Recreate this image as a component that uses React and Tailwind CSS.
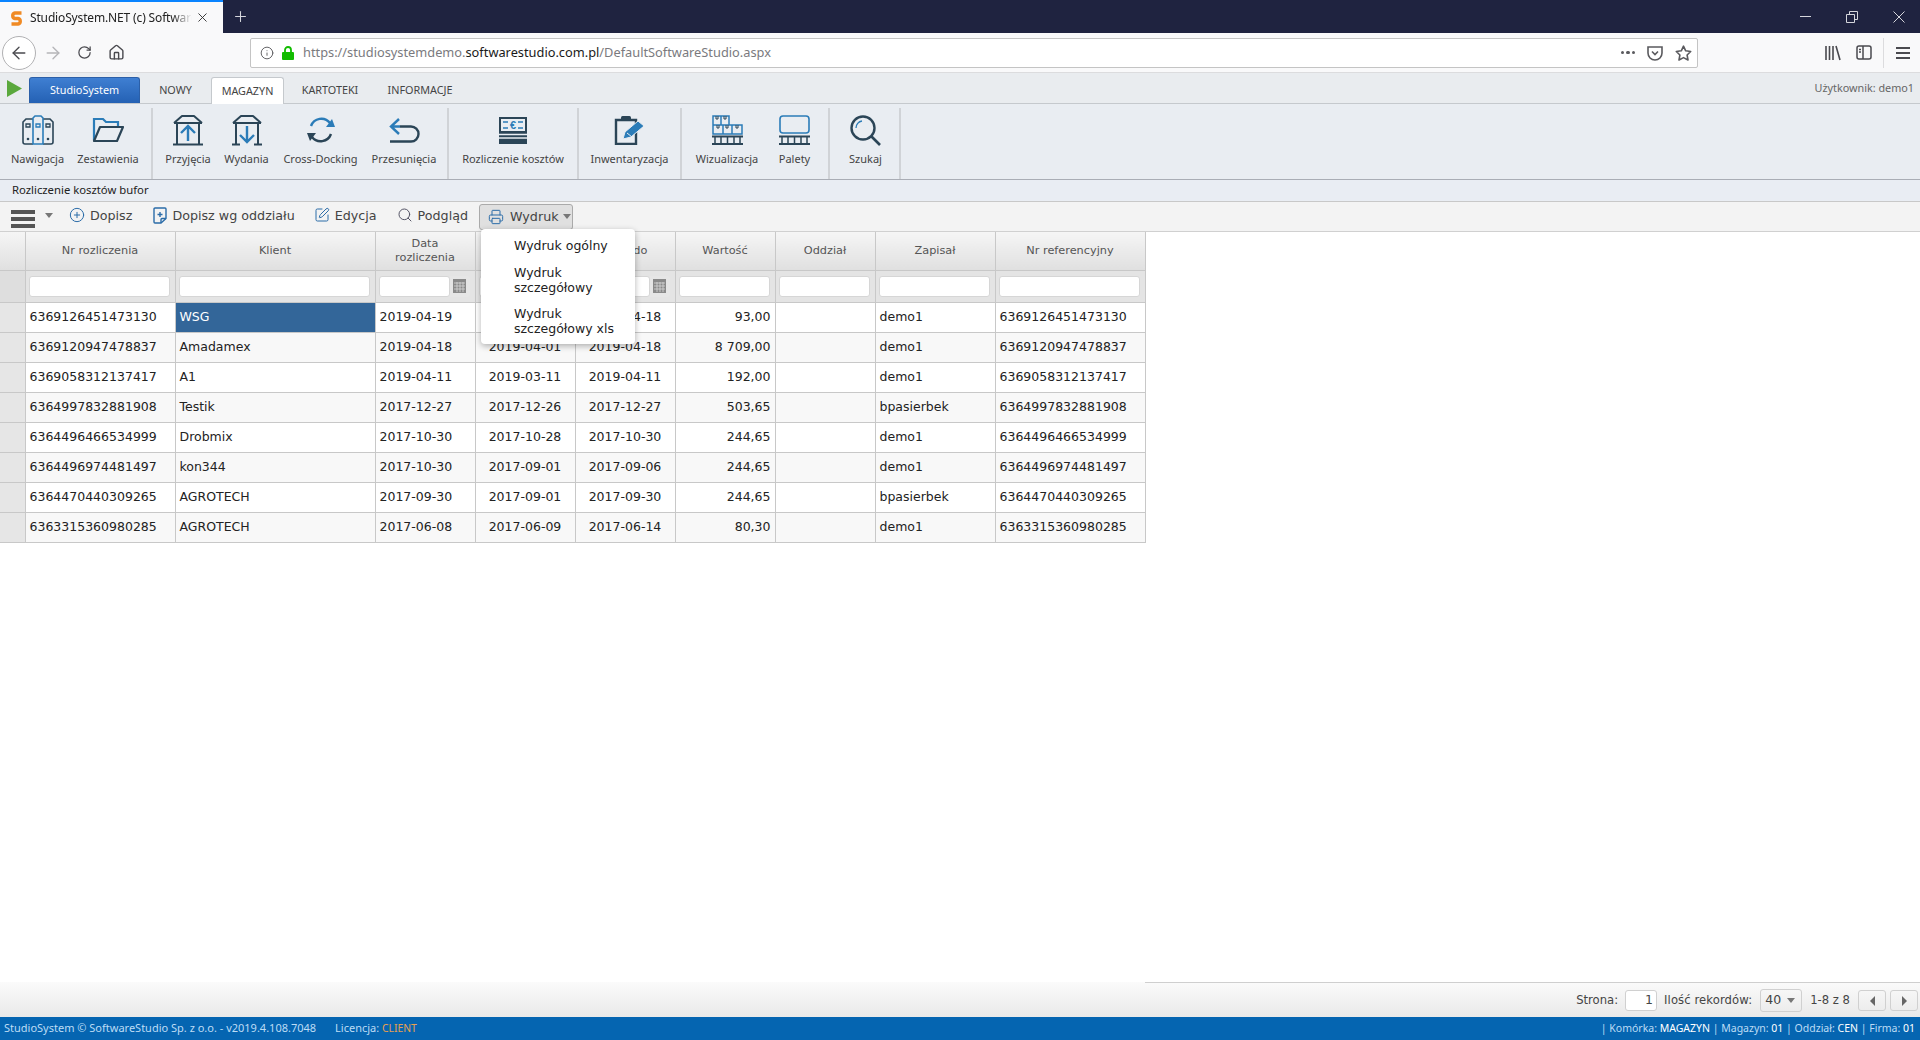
import { ArrowLeft, ArrowRight, RotateCw, House, Info, Plus, X, CirclePlus, SquarePen, Search, Printer } from "lucide-react";

const ui = "font-['Noto_Sans',sans-serif]";
const grid = "font-['DejaVu_Sans',sans-serif]";

const DARK = "#2b4557";
const BLUE = "#2b7cb8";

function Binders() {
  return (
    <svg width="32" height="30" viewBox="0 0 32 30" fill="none" strokeWidth="1.6">
      <path d="M11 29H3a2 2 0 0 1-2-2V7l3-3h7M21 29h8a2 2 0 0 0 2-2V7l-3-3h-7" stroke={DARK} />
      <path d="M11 29V3l2-2h6l2 2v26z" stroke={BLUE} />
      <path d="M4 9h4v3H4zM24 9h4v3h-4z" stroke={DARK} strokeWidth="1.3" />
      <path d="M14 9h4v3h-4z" stroke={BLUE} strokeWidth="1.3" />
      <circle cx="6" cy="24" r="1.3" fill={DARK} />
      <circle cx="16" cy="24" r="1.3" fill={DARK} />
      <circle cx="26" cy="24" r="1.3" fill={DARK} />
    </svg>
  );
}

function Folder() {
  return (
    <svg width="32" height="26" viewBox="0 0 32 26" fill="none" strokeWidth="2.2">
      <path d="M2 23V2h9l3 3h12v4" stroke={BLUE} />
      <path d="M2 24h23l6-14H8z" stroke={DARK} strokeLinejoin="round" />
    </svg>
  );
}

function Store({ down }) {
  return (
    <svg width="34" height="32" viewBox="0 0 34 32" fill="none" strokeWidth="2">
      <path d="M3 9l8-7h12l8 7M3 9h28M6 9v21M28 9v21" stroke={DARK} strokeLinejoin="round" />
      {down ? (
        <>
          <path d="M2 30.5h8M24 30.5h8" stroke={DARK} />
          <path d="M17 12v16M10 21l7 7 7-7" stroke={BLUE} strokeWidth="2.4" />
        </>
      ) : (
        <>
          <path d="M2 30.5h30" stroke={DARK} />
          <path d="M17 27V12M10 19l7-7 7 7" stroke={BLUE} strokeWidth="2.4" />
        </>
      )}
    </svg>
  );
}

function CrossDock() {
  return (
    <svg width="30" height="26" viewBox="0 0 30 26" fill="none" strokeWidth="2.4">
      <path d="M5 9a11 11 0 0 1 19-3" stroke={BLUE} />
      <path d="M20 10h9l-3-8z" fill={BLUE} />
      <path d="M25 17a11 11 0 0 1-19 3" stroke={DARK} />
      <path d="M10 16H1l3 8z" fill={DARK} />
    </svg>
  );
}

function Transfer() {
  return (
    <svg width="32" height="27" viewBox="0 0 32 27" fill="none" strokeWidth="2.4">
      <path d="M11 2L3 9.5l8 7.5M3 9.5h9" stroke={BLUE} />
      <path d="M12 9.5h11a7 7 0 0 1 0 15H2" stroke={DARK} />
    </svg>
  );
}

function Bill() {
  return (
    <svg width="30" height="29" viewBox="0 0 30 29">
      <rect x="1" y="1" width="28" height="27" fill={DARK} />
      <rect x="3" y="3" width="24" height="12" fill="#e9edf2" />
      <path d="M5 6h5M20 6h5M5 12h5M20 12h5" stroke={BLUE} strokeWidth="1.4" />
      <text x="15" y="13" textAnchor="middle" fontSize="11" fontWeight="700" fontFamily="Liberation Sans" fill={BLUE}>€</text>
      <path d="M1 18.5h28M1 22h28" stroke="#e9edf2" strokeWidth="1.3" />
    </svg>
  );
}

function Clipboard() {
  return (
    <svg width="31" height="30" viewBox="0 0 31 30" fill="none">
      <path d="M2 5h20v24H2z" stroke={DARK} strokeWidth="2.4" />
      <rect x="7" y="1" width="10" height="5" rx="1.5" fill={DARK} />
      <path d="M9 24l2-7L24 6l6 5-13 11z" fill={BLUE} stroke="#e9edf2" strokeWidth="1" />
      <path d="M13 18l5 4" stroke="#e9edf2" strokeWidth="1" />
    </svg>
  );
}

function Pallet() {
  return (
    <>
      <path d="M0 21.5h31M0 29h31" stroke={DARK} strokeWidth="2.2" />
      <path d="M3 22v6M15.5 22v6M28 22v6M9 22v6M22 22v6" stroke={DARK} strokeWidth="1.5" />
    </>
  );
}

function Boxes() {
  return (
    <svg width="31" height="30" viewBox="0 0 31 30" fill="none">
      <path d="M1 1h8v9H1zM9 1h8v9H9zM1 10h10v9H1zM11 10h9v9h-9zM20 10h10v9H20z" stroke={BLUE} strokeWidth="1.5" />
      <path d="M4 1v3h2V1M12 1v3h2V1M5 10v3h2v-3M14 10v3h2v-3M24 10v3h2v-3" stroke={DARK} strokeWidth="1" />
      <Pallet />
    </svg>
  );
}

function PalletIcon() {
  return (
    <svg width="31" height="30" viewBox="0 0 31 30" fill="none">
      <rect x="1" y="1" width="29" height="17" rx="3" stroke={BLUE} strokeWidth="1.6" />
      <Pallet />
    </svg>
  );
}

function Lens() {
  return (
    <svg width="31" height="31" viewBox="0 0 31 31" fill="none">
      <circle cx="13" cy="13" r="11.5" stroke={DARK} strokeWidth="2.4" />
      <path d="M6 13a7 7 0 0 1 6-7" stroke={BLUE} strokeWidth="1.3" />
      <path d="M21 21l9 9" stroke={DARK} strokeWidth="2.6" />
    </svg>
  );
}

const ribbon = [
  { w: "w-[153px]", items: [["Nawigacja", "w-[75px]", <Binders />], ["Zestawienia", "w-[66px]", <Folder />]] },
  { w: "w-[296px] pl-[6px]", items: [["Przyjęcia", "w-[58px]", <Store />], ["Wydania", "w-[59px]", <Store down />], ["Cross-Docking", "w-[89px]", <CrossDock />], ["Przesunięcia", "w-[78px]", <Transfer />]] },
  { w: "w-[130px]", items: [["Rozliczenie kosztów", "w-[130px]", <Bill />]] },
  { w: "w-[103px]", items: [["Inwentaryzacja", "w-[103px]", <Clipboard />]] },
  { w: "w-[148px]", items: [["Wizualizacja", "w-[90px]", <Boxes />], ["Palety", "w-[45px]", <PalletIcon />]] },
  { w: "w-[71px] pl-[2px]", items: [["Szukaj", "w-[67px]", <Lens />]] },
];

const rows = [
  ["6369126451473130", "WSG", "2019-04-19", "2019-04-01", "2019-04-18", "93,00", "", "demo1", "6369126451473130"],
  ["6369120947478837", "Amadamex", "2019-04-18", "2019-04-01", "2019-04-18", "8 709,00", "", "demo1", "6369120947478837"],
  ["6369058312137417", "A1", "2019-04-11", "2019-03-11", "2019-04-11", "192,00", "", "demo1", "6369058312137417"],
  ["6364997832881908", "Testik", "2017-12-27", "2017-12-26", "2017-12-27", "503,65", "", "bpasierbek", "6364997832881908"],
  ["6364496466534999", "Drobmix", "2017-10-30", "2017-10-28", "2017-10-30", "244,65", "", "demo1", "6364496466534999"],
  ["6364496974481497", "kon344", "2017-10-30", "2017-09-01", "2017-09-06", "244,65", "", "demo1", "6364496974481497"],
  ["6364470440309265", "AGROTECH", "2017-09-30", "2017-09-01", "2017-09-30", "244,65", "", "bpasierbek", "6364470440309265"],
  ["6363315360980285", "AGROTECH", "2017-06-08", "2017-06-09", "2017-06-14", "80,30", "", "demo1", "6363315360980285"],
];

const columns = [
  ["Nr rozliczenia", 150],
  ["Klient", 200],
  ["Data rozliczenia", 100, true],
  ["Data od", 100, true],
  ["Data do", 100, true],
  ["Wartość", 100],
  ["Oddział", 100],
  ["Zapisał", 120],
  ["Nr referencyjny", 150],
];

function CalendarBtn() {
  return (
    <span className="w-[20px] h-[21px] bg-[#e6e6e6] rounded-r-[3px] flex items-center justify-center">
      <svg width="13" height="14" viewBox="0 0 13 14">
        <rect width="13" height="14" fill="#8a8a8a" />
        <path d="M1 4h11M1 7h11M1 10h11M4 3v10M7 3v10M10 3v10" stroke="#d8d8d8" strokeWidth="0.8" />
      </svg>
    </span>
  );
}

function FilterCell({ date }) {
  return (
    <th className="border-r border-b border-[#c8c8c8] bg-[#e4e4e4] pl-[3px] pr-[5px] font-normal">
      <div className="flex items-center h-[21px]">
        <span className="flex-1 h-[21px] bg-white rounded-[3px] border border-[#d6d6d6]" />
        {date && <CalendarBtn />}
      </div>
    </th>
  );
}

function ToolButton({ icon, children, className }) {
  return (
    <span className={`flex items-center gap-[5px] ${className}`}>
      {icon}
      {children}
    </span>
  );
}

function Caret({ className }) {
  return <span className={`w-0 h-0 border-x-[4px] border-x-transparent border-t-[5px] border-t-[#777] ${className}`} />;
}

export default function App() {
  return (
    <div className={`relative w-[1920px] h-[1040px] flex flex-col overflow-hidden bg-white ${ui}`}>
      {/* browser tabs */}
      <div className="h-[33px] bg-[#1f2340] flex flex-none">
        <div className="w-[223px] bg-[#f9f9fa] border-t-2 border-[#0a84ff] flex items-center pl-[9px]">
          <svg width="15" height="18" viewBox="0 0 15 18" className="flex-none">
            <path d="M12.5 4H6a2.8 2.8 0 0 0 0 5.5h3a2.8 2.8 0 0 1 0 5.5H2.5" stroke="#f08a24" strokeWidth="3.4" fill="none" />
          </svg>
          <span className="ml-[6px] w-[162px] whitespace-nowrap overflow-hidden text-[12px] tracking-[-0.15px] text-[#222] [mask-image:linear-gradient(to_right,black_88%,transparent)]">
            StudioSystem.NET (c) Software
          </span>
          <X size={15} strokeWidth={1.5} className="ml-[3px] text-[#333]" />
        </div>
        <div className="w-[34px] flex items-center justify-center">
          <Plus size={17} strokeWidth={1.5} className="text-[#d5d6dc]" />
        </div>
        <div className="flex-1" />
        <div className="flex items-center text-[#d5d6dc] pr-[15px] gap-[35px]">
          <span className="w-[11px] h-px bg-[#d5d6dc]" />
          <svg width="12" height="12" viewBox="0 0 12 12" fill="none" stroke="#d5d6dc"><path d="M.5 3.5h8v8h-8zM3.5 3V.5h8v8H9" /></svg>
          <svg width="12" height="12" viewBox="0 0 12 12" fill="none" stroke="#d5d6dc"><path d="M.5.5l11 11M11.5.5l-11 11" /></svg>
        </div>
      </div>

      {/* browser nav */}
      <div className="h-[40px] bg-[#f9f9fa] border-b border-[#dcdcde] flex items-center flex-none text-[#4a4a4f]">
        <span className="ml-[2px] w-[34px] h-[34px] rounded-full border border-[#b1b1b3] bg-white flex items-center justify-center">
          <ArrowLeft size={20} strokeWidth={1.6} />
        </span>
        <ArrowRight size={20} strokeWidth={1.6} className="ml-[7px] text-[#b5b5b8]" />
        <RotateCw size={15} strokeWidth={2} className="ml-[14px]" />
        <House size={17} strokeWidth={2} className="ml-[16px]" />
        <div className="ml-[125px] w-[1448px] h-[30px] bg-white border border-[#c4c4c4] rounded-[2px] flex items-center">
          <Info size={14} strokeWidth={1.6} className="ml-[9px] text-[#5a5a5e]" />
          <svg width="12" height="14" viewBox="0 0 12 14" className="ml-[8px]">
            <path d="M3 6V4a3 3 0 0 1 6 0v2" stroke="#12bc00" strokeWidth="1.8" fill="none" />
            <rect y="6" width="12" height="8" rx="1" fill="#12bc00" />
          </svg>
          <span className="ml-[9px] text-[12.8px] text-[#7a7a7e] whitespace-nowrap">
            https://studiosystemdemo.<span className="text-[#1a1a1a]">softwarestudio.com.pl</span>/DefaultSoftwareStudio.aspx
          </span>
          <div className="flex-1" />
          <span className="flex gap-[2px]">
            <span className="w-[3.5px] h-[3.5px] rounded-full bg-[#5a5a5e]" />
            <span className="w-[3.5px] h-[3.5px] rounded-full bg-[#5a5a5e]" />
            <span className="w-[3.5px] h-[3.5px] rounded-full bg-[#5a5a5e]" />
          </span>
          <svg width="16" height="16" viewBox="0 0 16 16" fill="none" stroke="#5a5a5e" strokeWidth="1.6" className="ml-[12px]">
            <path d="M1 2h14v6a7 7 0 0 1-14 0z" />
            <path d="M5 6.5l3 3 3-3" />
          </svg>
          <svg width="17" height="16" viewBox="0 0 17 16" fill="none" stroke="#5a5a5e" strokeWidth="1.6" strokeLinejoin="round" className="ml-[12px] mr-[5px]">
            <path d="M8.5 1.2l2.2 4.6 5 .7-3.6 3.5.9 5-4.5-2.4L4 15l.9-5L1.3 6.5l5-.7z" />
          </svg>
        </div>
        <svg width="16" height="16" viewBox="0 0 16 16" fill="none" stroke="#4a4a4f" strokeWidth="1.6" className="ml-[127px]">
          <path d="M1 1v14M4.5 1v14M8 1v14M11 1l4 14" />
        </svg>
        <svg width="16" height="15" viewBox="0 0 16 15" fill="none" stroke="#4a4a4f" strokeWidth="1.5" className="ml-[15px]">
          <rect x="1" y="1" width="14" height="13" rx="2" />
          <path d="M7 1v13M3 4.5h2M3 7h2" />
        </svg>
        <span className="ml-[11px] h-[30px] w-px bg-[#dcdcde]" />
        <svg width="14" height="14" viewBox="0 0 14 14" stroke="#4a4a4f" strokeWidth="1.8" className="ml-[12px]">
          <path d="M0 2h14M0 7h14M0 12h14" />
        </svg>
      </div>

      {/* ribbon tabs */}
      <div className="h-[31px] bg-[#e9ecef] border-b border-[#c5c9cd] flex items-end flex-none relative text-[10.8px] text-[#444]">
        <span className="self-center ml-[7px]">
          <svg width="15" height="17" viewBox="0 0 15 17"><path d="M0 0l15 8.5L0 17z" fill="#5aa83c" /></svg>
        </span>
        <span className="ml-[7px] w-[111px] h-[26px] rounded-t-[3px] bg-gradient-to-b from-[#3f7fd2] to-[#2461b4] border border-[#2b5fa8] border-b-0 text-white flex items-center justify-center">
          StudioSystem
        </span>
        <span className="w-[71px] h-[26px] flex items-center justify-center">NOWY</span>
        <span className="w-[73px] h-[27px] -mb-px bg-white rounded-t-[3px] border border-[#c5c9cd] border-b-0 flex items-center justify-center">
          MAGAZYN
        </span>
        <span className="w-[92px] h-[26px] flex items-center justify-center">KARTOTEKI</span>
        <span className="w-[88px] h-[26px] flex items-center justify-center">INFORMACJE</span>
        <div className="flex-1" />
        <span className="self-center mr-[6px] text-[#666]">Użytkownik: demo1</span>
      </div>

      {/* ribbon */}
      <div className="h-[76px] bg-[#e9edf2] border-b border-[#a9adb5] flex flex-none">
        {ribbon.map((group) => (
          <div key={group.items[0][0]} className={`${group.w} flex mt-[4px] border-r-2 border-[#d0d3d7] box-border`}>
            {group.items.map(([label, w, icon]) => (
              <div key={label} className={`${w} flex flex-col items-center`}>
                <div className="h-[36px] mt-[4px] flex items-center justify-center">{icon}</div>
                <span className="mt-[3px] text-[11px] text-[#444] whitespace-nowrap">{label}</span>
              </div>
            ))}
          </div>
        ))}
      </div>

      {/* title */}
      <div className="h-[22px] bg-[#e9edf3] flex items-center pl-[12px] text-[11.3px] text-[#222] flex-none border-b border-[#c8c8c8]">
        Rozliczenie kosztów bufor
      </div>

      {/* toolbar */}
      <div className={`h-[30px] pb-[2px] flex-none bg-[#f3f3f3] border-b border-[#d0d0d0] flex items-center text-[12.7px] text-[#444] ${grid}`}>
        <span className="ml-[11px] mt-[6px] w-[24px] h-[18px] flex flex-col justify-between">
          <span className="h-[4px] bg-[#555]" />
          <span className="h-[4px] bg-[#555]" />
          <span className="h-[4px] bg-[#555]" />
        </span>
        <Caret className="ml-[10px]" />
        <ToolButton className="ml-[16px]" icon={<CirclePlus size={16} strokeWidth={1.5} className="text-[#2b6ca8]" />}>Dopisz</ToolButton>
        <ToolButton
          className="ml-[21px]"
          icon={
            <svg width="14" height="17" viewBox="0 0 14 17" fill="none" stroke="#2b6ca8" strokeWidth="1.4">
              <path d="M8 16H2a1 1 0 0 1-1-1V2a1 1 0 0 1 1-1h10a1 1 0 0 1 1 1v9.5z" />
              <path d="M7 5v5M4.5 7.5h5M8 16v-3.5a1 1 0 0 1 1-1h4" />
            </svg>
          }
        >
          Dopisz wg oddziału
        </ToolButton>
        <ToolButton className="ml-[19px]" icon={<SquarePen size={16} strokeWidth={1.5} className="text-[#2b6ca8]" />}>Edycja</ToolButton>
        <ToolButton className="ml-[20px]" icon={<Search size={16} strokeWidth={1.5} className="text-[#556]" />}>Podgląd</ToolButton>
        <span className="ml-[11px] mt-[2px] w-[94px] h-[26px] bg-[#e0e0e0] border border-[#aaa] rounded-[3px] flex items-center pl-[8px] gap-[6px]">
          <Printer size={16} strokeWidth={1.5} className="text-[#2b6ca8]" />
          Wydruk
          <Caret className="-ml-[2px]" />
        </span>
      </div>

      {/* grid */}
      <div className={`flex-1 ${grid}`}>
        <table className="table-fixed w-[1145px] border-collapse">
          <colgroup>
            <col className="w-[25px]" />
            {columns.map(([name, w]) => (
              <col key={name} style={{ width: w }} />
            ))}
          </colgroup>
          <thead>
            <tr className="h-[38px]">
              <th className="border-r border-b border-[#c8c8c8] bg-gradient-to-b from-[#f5f5f5] to-[#e0e0e0]" />
              {columns.map(([name]) => (
                <th key={name} className="border-r border-b border-[#c8c8c8] bg-gradient-to-b from-[#f5f5f5] to-[#e0e0e0] font-normal text-[11.3px] leading-[14px] text-[#555] px-[12px]">
                  {name}
                </th>
              ))}
            </tr>
            <tr className="h-[32px]">
              <th className="border-r border-b border-[#c8c8c8] bg-[#dedede]" />
              {columns.map(([name, , date]) => (
                <FilterCell key={name} date={date} />
              ))}
            </tr>
          </thead>
          <tbody>
            {rows.map((r, i) => (
              <tr key={r[0]} className={`h-[30px] text-[12.5px] text-[#222] ${i % 2 ? "bg-[#f8f8f8]" : "bg-white"}`}>
                <td className="bg-[#e6e6e6] border-r border-b border-[#c8c8c8]" />
                {r.map((v, c) => (
                  <td
                    key={c}
                    className={`border-r border-b border-[#c8c8c8] px-[4px] whitespace-nowrap overflow-hidden ${
                      c === 3 || c === 4 ? "text-center" : c === 5 ? "text-right" : "text-left"
                    } ${i === 0 && c === 1 ? "bg-[#336699] text-white" : ""}`}
                  >
                    {v}
                  </td>
                ))}
              </tr>
            ))}
          </tbody>
        </table>
      </div>

      {/* pager */}
      <div className={`h-[35px] pt-[2px] flex-none flex items-center justify-end bg-gradient-to-b from-[#fbfbfb] to-[#e9e9e9] text-[11.6px] text-[#444] ${grid} relative`}>
        <span className="absolute left-[1145px] right-0 top-0 h-px bg-[#cfcfcf]" />
        <span>Strona:</span>
        <span className="ml-[7px] w-[32px] h-[21px] bg-white border border-[#d0d0d0] rounded-[3px] flex items-center justify-end pr-[3px] text-[12.5px]">1</span>
        <span className="ml-[7px] tracking-[0.1px]">Ilość rekordów:</span>
        <span className="ml-[8px] w-[42px] h-[23px] border border-[#d0d0d0] rounded-[3px] flex items-center pl-[4px] text-[12.5px]">
          40
          <Caret className="ml-[6px]" />
        </span>
        <span className="ml-[8px]">1-8 z 8</span>
        <span className="ml-[8px] w-[28px] h-[21px] border border-[#d0d0d0] rounded-[3px] flex items-center justify-center">
          <span className="w-0 h-0 border-y-[5px] border-y-transparent border-r-[5px] border-r-[#666]" />
        </span>
        <span className="ml-[4px] mr-[2px] w-[28px] h-[21px] border border-[#d0d0d0] rounded-[3px] flex items-center justify-center">
          <span className="w-0 h-0 border-y-[5px] border-y-transparent border-l-[5px] border-l-[#666]" />
        </span>
      </div>

      {/* status bar */}
      <div className="h-[23px] flex-none bg-[#0565b1] flex items-center text-[11px] text-[#bcdcf5] pl-[4px] pr-[5px] whitespace-nowrap">
        <span>StudioSystem © SoftwareStudio Sp. z o.o. - v2019.4.108.7048</span>
        <span className="ml-[19px]">Licencja: <span className="text-[10.3px] text-[#e8a050]">CLIENT</span></span>
        <div className="flex-1" />
        <span className="text-[10.5px]">
          | Komórka: <span className="text-white">MAGAZYN</span> | Magazyn: <span className="text-white">01</span> | Oddział: <span className="text-white">CEN</span> | Firma: <span className="text-white">01</span>
        </span>
      </div>

      {/* print menu */}
      <div className={`absolute left-[481px] top-[229px] w-[154px] h-[115px] bg-white rounded-[4px] shadow-[0_2px_6px_rgba(0,0,0,0.3)] pl-[33px] pr-[4px] text-[12.5px] leading-[15px] text-[#222] ${grid}`}>
        <div className="mt-[9px]">Wydruk ogólny</div>
        <div className="mt-[12px]">Wydruk<br />szczegółowy</div>
        <div className="mt-[11px]">Wydruk<br />szczegółowy xls</div>
      </div>
    </div>
  );
}
